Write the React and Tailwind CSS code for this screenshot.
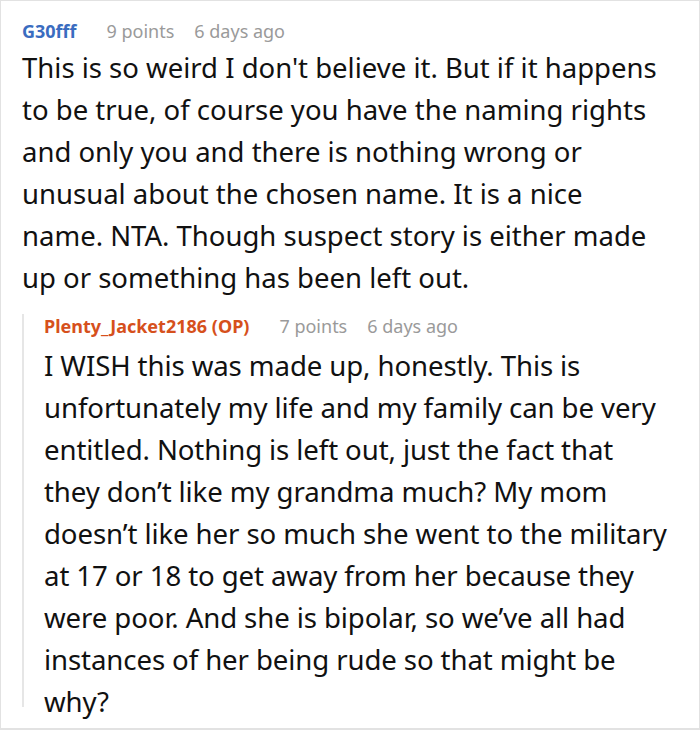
import React from "react";

const comments = {
  parent: {
    user: "G30fff",
    points: "9 points",
    time: "6 days ago",
    text: "This is so weird I don't believe it. But if it happens to be true, of course you have the naming rights and only you and there is nothing wrong or unusual about the chosen name. It is a nice name. NTA. Though suspect story is either made up or something has been left out.",
  },
  reply: {
    user: "Plenty_Jacket2186 (OP)",
    points: "7 points",
    time: "6 days ago",
    // kept as the lines shown in the thread
    lines: [
      "I WISH this was made up, honestly. This is",
      "unfortunately my life and my family can be very",
      "entitled. Nothing is left out, just the fact that",
      "they don\u2019t like my grandma much? My mom",
      "doesn\u2019t like her so much she went to the military",
      "at 17 or 18 to get away from her because they",
      "were poor. And she is bipolar, so we\u2019ve all had",
      "instances of her being rude so that might be",
      "why?",
    ],
  },
};

const Meta = ({ user, points, time, color }) => (
  <div className="flex items-center text-[18px] leading-[24px] whitespace-nowrap">
    <span className={`font-bold ${color}`}>{user}</span>
    <span className="ml-[30px] text-[#9a9a9a]">{points}</span>
    <span className="ml-[20px] text-[#9a9a9a]">{time}</span>
  </div>
);

const App = () => {
  const { parent, reply } = comments;

  return (
    <div
      className="w-[700px] h-[730px] bg-white border border-b-2 border-[#e2e2e2] overflow-hidden text-[#111]"
      style={{ fontFamily: '"Noto Sans", "Open Sans", sans-serif' }}
    >
      <div className="pl-[21px] pr-[34px] pt-[18px]">
        <Meta {...parent} color="text-[#3a6cc0]" />
        <p className="mt-[4px] text-[27.5px] leading-[42px]">{parent.text}</p>
      </div>

      <div className="ml-[21px] mt-[19px] h-[393px] border-l-2 border-[#e6e6e6] pl-[20px]">
        <div className="-mt-[4px]">
          <Meta {...reply} color="text-[#d6501c]" />
        </div>
        <div className="mt-[6px] text-[27.6px] leading-[42px] whitespace-nowrap tracking-[-0.1px]">
          {reply.lines.map((line) => (
            <div key={line}>{line}</div>
          ))}
        </div>
      </div>
    </div>
  );
};

export default App;
